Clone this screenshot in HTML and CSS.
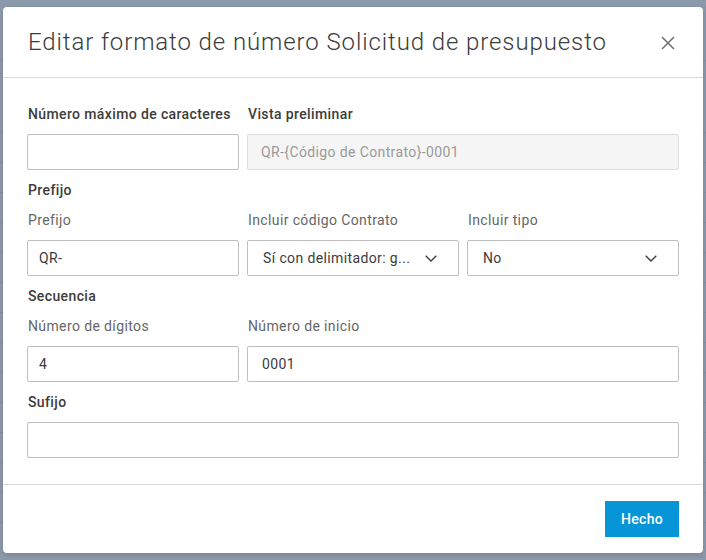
FILE: index.html
```html
<!DOCTYPE html>
<html lang="es">
<head>
<meta charset="utf-8">
<title>Editar formato de número</title>
<link rel="stylesheet" href="styles.css">
</head>
<body>
<div class="modal">
  <header class="modal-header">
    <h1 class="title">Editar formato de número Solicitud de presupuesto</h1>
    <button class="close" aria-label="Cerrar">
      <svg width="14" height="14" viewBox="0 0 14 14"><path d="M1 1 L13 13 M13 1 L1 13" stroke="#6f6f6f" stroke-width="1.5" fill="none"/></svg>
    </button>
  </header>
  <div class="modal-body">
    <div class="row">
      <div class="field">
        <div class="label strong">Número máximo de caracteres</div>
        <div class="input pad-s"></div>
      </div>
      <div class="field span2">
        <div class="label strong">Vista preliminar</div>
        <div class="input preview">QR-{Código de Contrato}-0001</div>
      </div>
    </div>
    <div class="section">Prefijo</div>
    <div class="row">
      <div class="field">
        <div class="label">Prefijo</div>
        <div class="input pad-s">QR-</div>
      </div>
      <div class="field">
        <div class="label">Incluir código Contrato</div>
        <div class="input select"><span>Sí con delimitador: g...</span>
          <svg class="chev" width="12" height="7" viewBox="0 0 12 7"><path d="M0.7 0.7 L6 6 L11.3 0.7" stroke="#3c3c3c" stroke-width="1.3" fill="none"/></svg>
        </div>
      </div>
      <div class="field">
        <div class="label">Incluir tipo</div>
        <div class="input select"><span>No</span>
          <svg class="chev" width="12" height="7" viewBox="0 0 12 7"><path d="M0.7 0.7 L6 6 L11.3 0.7" stroke="#3c3c3c" stroke-width="1.3" fill="none"/></svg>
        </div>
      </div>
    </div>
    <div class="section">Secuencia</div>
    <div class="row">
      <div class="field">
        <div class="label">Número de dígitos</div>
        <div class="input pad-s">4</div>
      </div>
      <div class="field span2">
        <div class="label">Número de inicio</div>
        <div class="input">0001</div>
      </div>
    </div>
    <div class="section">Sufijo</div>
    <div class="input full"></div>
  </div>
  <footer class="modal-footer">
    <button class="btn-primary">Hecho</button>
  </footer>
</div>
</body>
</html>
```
FILE: styles.css
```css
* { box-sizing: border-box; }
html, body { margin: 0; height: 100%; }
body {
  font-family: Roboto, "Liberation Sans", sans-serif;
  padding: 7px 3px;
  background:
    linear-gradient(#8391a3, #8391a3) 0 60px / 100% 1px no-repeat,
    linear-gradient(#8391a3, #8391a3) 0 132px / 100% 1px no-repeat,
    repeating-linear-gradient(to bottom, #8391a3 0 1px, transparent 1px 30px) 0 162px / 100% 390px no-repeat,
    #8d9aab;
}
.modal {
  width: 700px;
  height: 546px;
  background: #fff;
  border-radius: 4px;
  box-shadow: 0 2px 6px rgba(0,0,0,0.15);
  display: flex;
  flex-direction: column;
}
.modal-header {
  height: 71px;
  border-bottom: 1px solid #d9d9d9;
  display: flex;
  align-items: center;
  justify-content: space-between;
  padding: 0 28px 0 25px;
}
.title {
  margin: 0;
  font-size: 24px;
  font-weight: 300;
  color: #3c3c3c;
  letter-spacing: 0.9px;
}
.close {
  border: 0;
  background: none;
  padding: 0;
  width: 14px;
  height: 14px;
  display: flex;
  margin-top: 2px;
}
.modal-body {
  padding: 26px 24px 26px 24px;
  border-bottom: 1px solid #d9d9d9;
  display: flex;
  flex-direction: column;
  gap: 10px;
  letter-spacing: 0.38px;
}
.row {
  display: grid;
  grid-template-columns: repeat(3, 1fr);
  column-gap: 8px;
}
.field {
  display: flex;
  flex-direction: column;
  gap: 10px;
}
.span2 { grid-column: span 2; }
.label {
  height: 20px;
  line-height: 20px;
  font-size: 14px;
  color: #666;
  padding-left: 1px;
}
.label.strong, .section {
  font-weight: 500;
  color: #3c3c3c;
}
.section {
  height: 20px;
  line-height: 20px;
  font-size: 14px;
  padding-left: 1px;
}
.input {
  height: 36px;
  border: 1px solid #bfbfbf;
  border-radius: 2px;
  font-size: 14px;
  color: #3c3c3c;
  display: flex;
  align-items: center;
  padding: 0 14px;
}
.input.pad-s { padding-left: 11px; }
.input.preview {
  background: #f5f5f5;
  border-color: #dedede;
  color: #9a9a9a;
  padding-left: 13px;
}
.input.select {
  justify-content: space-between;
  padding: 0 21px 0 15px;
}
.chev { flex: none; }
.input.full { width: 100%; }
.modal-footer {
  flex: 1;
  display: flex;
  justify-content: flex-end;
  align-items: flex-start;
  padding: 16px 24px;
}
.btn-primary {
  width: 74px;
  height: 36px;
  border: 0;
  border-radius: 0;
  background: #0696d7;
  color: #fff;
  font-family: Roboto, "Liberation Sans", sans-serif;
  font-size: 14px;
  font-weight: 500;
  letter-spacing: 0.3px;
}
```
